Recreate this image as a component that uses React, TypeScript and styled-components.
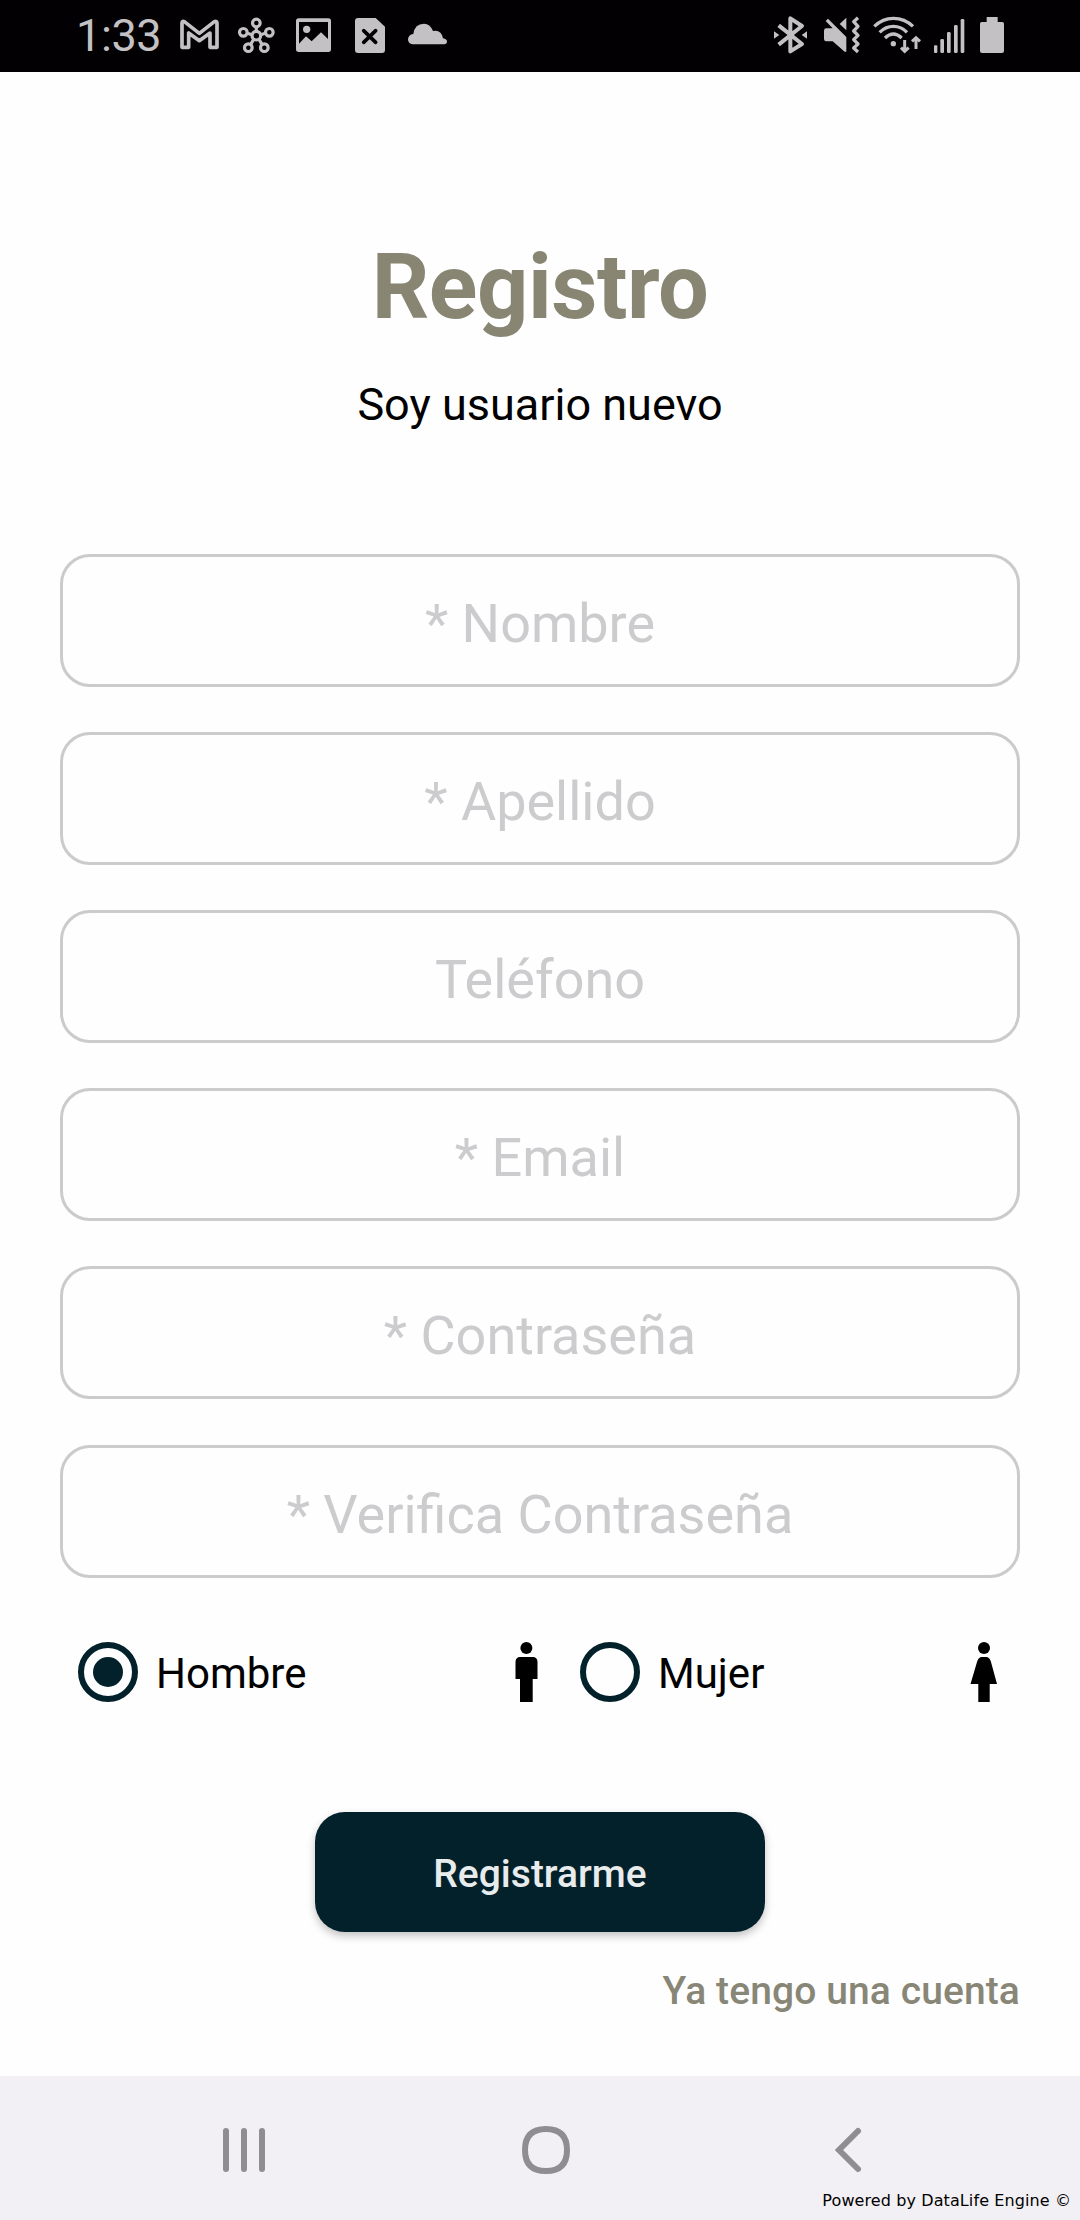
import React, { useState } from "react";
import styled, { createGlobalStyle } from "styled-components";

const GlobalStyle = createGlobalStyle`
  * { box-sizing: border-box; }
  body { margin: 0; background: #fefefe; }
`;

const Screen = styled.div`
  display: flex;
  flex-direction: column;
  width: 1080px;
  height: 2220px;
  background: #fefefe;
  font-family: Roboto, "Noto Sans", sans-serif;
  overflow: hidden;
`;

const StatusBar = styled.header`
  display: flex;
  justify-content: space-between;
  flex: none;
  height: 72px;
  padding: 0 68px 0 76px;
  background: #020003;
  color: #c3c1c4;
`;

const StatusGroup = styled.div`
  display: flex;
`;

const Clock = styled.time`
  width: 102px;
  font-size: 45px;
  line-height: 72px;
  letter-spacing: -0.4px;
  white-space: nowrap;
`;

const Glyph = styled.svg<{ $w: number }>`
  display: block;
  flex: none;
  width: ${(p) => p.$w}px;
  height: 72px;
  fill: currentColor;
`;

const Content = styled.main`
  display: flex;
  flex-direction: column;
  flex: 1;
  padding: 0 60px;
`;

const Title = styled.h1`
  margin: 163px 0 0;
  font-size: 90px;
  line-height: 106px;
  font-weight: 700;
  letter-spacing: -0.5px;
  text-align: center;
  color: #888673;
`;

const Subtitle = styled.p`
  margin: 37px 0 0;
  font-size: 45px;
  line-height: 54px;
  text-align: center;
  color: #000;
`;

const Form = styled.form`
  display: flex;
  flex-direction: column;
  margin-top: 122px;
`;

const Fields = styled.div`
  display: flex;
  flex-direction: column;
  gap: 45px;
`;

const Field = styled.input`
  width: 100%;
  height: 133px;
  padding: 5px 20px 0;
  border: 3px solid #cbcbcb;
  border-radius: 30px;
  background: transparent;
  font: 400 54px/64px Roboto, "Noto Sans", sans-serif;
  text-align: center;
  color: #000;
  outline: none;
  &::placeholder {
    color: #cccbcd;
    opacity: 1;
  }
  &:last-child {
    margin-top: 1px;
  }
`;

const Genders = styled.div`
  display: flex;
  margin-top: 64px;
  padding-left: 18px;
`;

const Option = styled.button<{ $width: number }>`
  display: flex;
  align-items: center;
  flex: none;
  width: ${(p) => p.$width}px;
  height: 60px;
  padding: 0;
  border: 0;
  background: none;
  font: inherit;
  text-align: left;
`;

const Ring = styled.span`
  display: flex;
  align-items: center;
  justify-content: center;
  width: 60px;
  height: 60px;
  border: 6px solid #03212a;
  border-radius: 50%;
`;

const Dot = styled.span`
  width: 30px;
  height: 30px;
  border-radius: 50%;
  background: #03212a;
`;

const OptionText = styled.span`
  flex: 1;
  margin-left: 18px;
  padding-top: 3px;
  font-size: 42px;
  line-height: 50px;
  color: #000;
`;

const Person = styled.svg`
  width: 60px;
  height: 60px;
  overflow: visible;
`;

const Submit = styled.button`
  align-self: center;
  width: 450px;
  height: 120px;
  margin-top: 110px;
  padding: 3px 0 0;
  border: 0;
  border-radius: 30px;
  background: #02212b;
  box-shadow: 0 4px 8px rgba(0, 0, 0, 0.24);
  color: #e9ecec;
  font: 500 39px/46px Roboto, "Noto Sans", sans-serif;
`;

const AccountLink = styled.a`
  align-self: flex-end;
  margin-top: 36px;
  font-size: 39px;
  line-height: 46px;
  font-weight: 500;
  letter-spacing: 0.1px;
  color: #888676;
`;

const NavBar = styled.footer`
  display: flex;
  flex-direction: column;
  flex: none;
  height: 144px;
  background: #f2f0f4;
`;

const NavKeys = styled.nav`
  display: flex;
  align-items: center;
  justify-content: space-between;
  height: 102px;
  padding: 46px 216px 0 220px;
`;

const NavIcon = styled.svg<{ $indent?: number }>`
  display: block;
  width: 48px;
  height: 56px;
  margin-left: ${(p) => p.$indent ?? 0}px;
  fill: none;
  stroke: #8f8d91;
  stroke-width: 6;
  stroke-linecap: round;
`;

const Credit = styled.small`
  align-self: flex-end;
  margin: 13px 9px 0 0;
  font: 16px/20px "DejaVu Sans", sans-serif;
  letter-spacing: 0.1px;
  color: #000;
`;

function NotificationIcons() {
  return (
    <>
      <Glyph $w={52} viewBox="354 0 156 216">
        <path
          d="M366 142V70Q366 62 373 65L418 100L463 65Q471 62 471 70V142H450V99L418 122L386 99V142Z"
          fill="none" stroke="currentColor" strokeWidth="11" strokeLinejoin="round"
        />
      </Glyph>
      <Glyph $w={56} viewBox="510 0 168 216">
        <g fill="none" stroke="currentColor" strokeWidth="9.5">
          <circle cx="589" cy="107" r="13" />
          <circle cx="589" cy="69" r="11.5" />
          <circle cx="550" cy="97" r="11.5" />
          <circle cx="628" cy="97" r="11.5" />
          <circle cx="565" cy="143" r="11.5" />
          <circle cx="613" cy="143" r="11.5" />
          <path d="M589 81V94M562 100L576 104M616 100L602 104M572 133L581 118M606 133L597 118" />
        </g>
      </Glyph>
      <Glyph $w={58} viewBox="678 0 174 216">
        <path
          fillRule="evenodd"
          d="M716 55H805Q813 55 813 63V148Q813 156 805 156H716Q708 156 708 148V63Q708 55 716 55ZM717 66V131L738 109L755 124L783 97L804 117V66Z"
        />
        <circle cx="740" cy="88" r="11" />
      </Glyph>
      <Glyph $w={54} viewBox="852 0 162 216">
        <path d="M894 54H947L975 80V150Q975 159 966 159H894Q885 159 885 150V63Q885 54 894 54Z" />
        <path d="M911 92L947 127M947 92L911 127" stroke="#020003" strokeWidth="11" strokeLinecap="round" />
      </Glyph>
      <Glyph $w={60} viewBox="1014 0 180 216">
        <path d="M1058 133Q1044 132 1044 118Q1045 104 1060 102Q1064 71 1092 71Q1110 71 1119 93Q1144 88 1149 115Q1161 117 1161 125Q1160 133 1150 133Z" />
      </Glyph>
    </>
  );
}

function SystemIcons() {
  return (
    <>
      <Glyph $w={48} viewBox="30 0 144 216">
        <path
          d="M56 76L126 132L91 154V55L126 78L56 134"
          fill="none" stroke="currentColor" strokeWidth="12" strokeLinejoin="round"
        />
        <path d="M42 94L58 105L42 116ZM141 94L125 105L141 116Z" />
      </Glyph>
      <Glyph $w={51} viewBox="174 0 153 216">
        <path d="M199 85H218L197 63L204 56L259 111V155H254L218 124H199Q192 124 192 117V92Q192 85 199 85ZM259 53V91L239 72Z" />
        <path
          d="M294 53L281 65L294 79L281 93L294 106L281 119L294 132L281 144L294 156"
          fill="none" stroke="currentColor" strokeWidth="10" strokeLinejoin="round"
        />
      </Glyph>
      <Glyph $w={58} viewBox="327 0 174 216">
        <g fill="none" stroke="currentColor" strokeWidth="10">
          <path d="M343 79Q368 55 400 55Q434 55 459 79M359 97Q377 79 400 79Q424 79 441 97M375 114Q400 90 425 114" />
          <path d="M434 120V154M423 143L434 154L446 143M468 147V113M456 124L468 113L480 124" strokeWidth="9" />
        </g>
        <circle cx="400" cy="131" r="8" />
      </Glyph>
      <Glyph $w={45} viewBox="501 0 135 216">
        <rect x="522" y="136" width="10" height="23" rx="3" />
        <rect x="541" y="117" width="11" height="42" rx="4" />
        <rect x="561" y="96" width="11" height="63" rx="4" />
        <rect x="582" y="75" width="11" height="84" rx="4" />
        <rect x="602" y="57" width="11" height="102" rx="4" />
      </Glyph>
      <Glyph $w={40} viewBox="636 0 120 216">
        <path d="M680 51H713V66H727Q732 66 732 71V153Q732 159 726 159H666Q660 159 660 153V71Q660 66 665 66H680Z" />
      </Glyph>
    </>
  );
}

const fields = [
  { name: "* Nombre", type: "text" },
  { name: "* Apellido", type: "text" },
  { name: "Teléfono", type: "tel" },
  { name: "* Email", type: "email" },
  { name: "* Contraseña", type: "password" },
  { name: "* Verifica Contraseña", type: "password" },
];

export default function App() {
  const [gender, setGender] = useState("Hombre");

  return (
    <Screen>
      <GlobalStyle />
      <StatusBar>
        <StatusGroup>
          <Clock>1:33</Clock>
          <NotificationIcons />
        </StatusGroup>
        <StatusGroup>
          <SystemIcons />
        </StatusGroup>
      </StatusBar>
      <Content>
        <Title>Registro</Title>
        <Subtitle>Soy usuario nuevo</Subtitle>
        <Form>
          <Fields>
            {fields.map((f) => (
              <Field key={f.name} type={f.type} placeholder={f.name} />
            ))}
          </Fields>
          <Genders>
            <Option type="button" $width={502} onClick={() => setGender("Hombre")}>
              <Ring>{gender === "Hombre" && <Dot />}</Ring>
              <OptionText>Hombre</OptionText>
              <Person viewBox="0 0 60 60">
                <circle cx="6.4" cy="6" r="6" />
                <path d="M-1 15H14Q17.5 16 17.5 20V37H12.7V60H0V37H-4.5V20Q-4.5 16 -1 15Z" />
              </Person>
            </Option>
            <Option type="button" $width={440} onClick={() => setGender("Mujer")}>
              <Ring>{gender === "Mujer" && <Dot />}</Ring>
              <OptionText>Mujer</OptionText>
              <Person viewBox="0 0 60 60">
                <circle cx="24" cy="6" r="6" />
                <path d="M21 15H27Q30 16 31 20L37 42H29.7V60H18.3V42H10.5L17 20Q18 16 21 15Z" />
              </Person>
            </Option>
          </Genders>
          <Submit type="button">Registrarme</Submit>
          <AccountLink>Ya tengo una cuenta</AccountLink>
        </Form>
      </Content>
      <NavBar>
        <NavKeys>
          <NavIcon viewBox="0 0 48 56">
            <path d="M6 9V47M24 9V47M42 9V47" />
          </NavIcon>
          <NavIcon viewBox="0 0 48 56" $indent={8}>
            <path d="M24 7C38 7 45 14 45 28S38 49 24 49S3 42 3 28S10 7 24 7Z" />
          </NavIcon>
          <NavIcon viewBox="0 0 48 56">
            <path d="M42 9L23 28L42 47" />
          </NavIcon>
        </NavKeys>
        <Credit>Powered by DataLife Engine ©</Credit>
      </NavBar>
    </Screen>
  );
}
